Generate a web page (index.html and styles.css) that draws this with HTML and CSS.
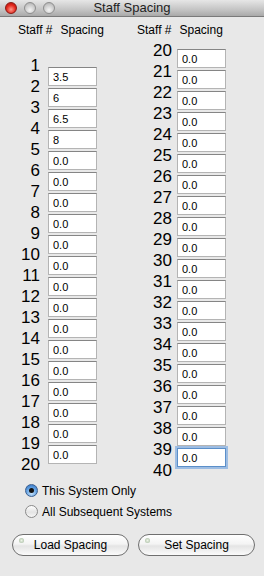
FILE: index.html
```html
<!DOCTYPE html>
<html lang="en">
<head>
    <meta charset="UTF-8">
    <meta name="viewport" content="width=device-width, initial-scale=1.0">
    <title>Staff Spacing</title>
    <link rel="stylesheet" href="styles.css">
</head>
<body>
    <header class="titlebar">
        <div class="lights">
            <span class="light light-close"></span>
            <span class="light"></span>
            <span class="light"></span>
        </div>
        <div class="title">Staff Spacing</div>
    </header>
    <main class="content">
        <div class="columns">
            <section class="col col-first">
                <div class="col-head"><span>Staff #</span><span>Spacing</span></div>
                <div class="col-body">
                    <div class="nums" id="nums-a"></div>
                    <div class="fields" id="fields-a"></div>
                </div>
            </section>
            <section class="col col-second">
                <div class="col-head"><span>Staff #</span><span>Spacing</span></div>
                <div class="col-body">
                    <div class="nums" id="nums-b"></div>
                    <div class="fields" id="fields-b"></div>
                </div>
            </section>
        </div>
        <div class="options">
            <label class="option"><span class="radio radio-on"></span>This System Only</label>
            <label class="option"><span class="radio"></span>All Subsequent Systems</label>
        </div>
        <div class="actions">
            <button class="pill">Load Spacing</button>
            <button class="pill">Set Spacing</button>
        </div>
    </main>
    <script>
        const values = ['3.5', '6', '6.5', '8'];

        // Fill one column: staff numbers from..to, one field between each pair
        function fillColumn(numsId, fieldsId, from, to, focusLast) {
            const nums = document.getElementById(numsId);
            const fields = document.getElementById(fieldsId);
            for (let n = from; n <= to; n++) {
                const num = document.createElement('div');
                num.className = 'num';
                num.textContent = n;
                nums.appendChild(num);
                if (n === to) break;
                const input = document.createElement('input');
                input.type = 'text';
                input.className = 'field';
                input.value = values[n - 1] || '0.0';
                if (focusLast && n === to - 1) input.classList.add('field-focus');
                fields.appendChild(input);
            }
        }

        fillColumn('nums-a', 'fields-a', 1, 20, false);
        fillColumn('nums-b', 'fields-b', 20, 40, true);
    </script>
</body>
</html>
```

FILE: styles.css
```css
body {
    margin: 0;
    padding: 0;
    background-color: #e8e8e8;
    font-family: "Liberation Sans", Arial, sans-serif;
    color: #000;
}

.titlebar {
    height: 16px;
    display: grid;
    grid-template-columns: 1fr auto 1fr;
    align-items: center;
    background: linear-gradient(#e6e6e6, #c4c4c4 60%, #a9a9a9);
    border-bottom: 1px solid #7a7a7a;
}

.lights {
    display: flex;
    gap: 7px;
    padding-left: 5px;
}

.light {
    width: 12px;
    height: 12px;
    border-radius: 50%;
    box-sizing: border-box;
    border: 1px solid #8e8e8e;
    background: radial-gradient(circle at 50% 70%, #f4f4f4, #c9c9c9 60%, #a8a8a8);
}

.light-close {
    border-color: #8a1a14;
    background: radial-gradient(circle at 50% 65%, #ff9a8c, #e2261b 55%, #a8140c);
}

.title {
    font-size: 13px;
    color: #1e1e1e;
    line-height: 16px;
}

.content {
    padding-top: 6px;
}

.columns {
    display: flex;
}

.col-first {
    width: 97px;
}

.col-second {
    margin-left: 35px;
}

.col-head {
    display: flex;
    gap: 8px;
    height: 14px;
    line-height: 14px;
    font-size: 12px;
    white-space: nowrap;
}

.col-first .col-head {
    padding-left: 18px;
}

.col-second .col-head {
    padding-left: 5px;
}

.col-body {
    display: flex;
}

.nums {
    width: 40px;
    text-align: right;
}

.num {
    height: 21px;
    line-height: 21px;
    font-size: 17px;
}

.col-first .nums {
    margin-top: 18px;
}

.col-first .fields {
    margin-top: 30px;
    margin-left: 8px;
}

.col-second .nums {
    margin-top: 3px;
}

.col-second .fields {
    margin-top: 12px;
    margin-left: 5px;
}

.field {
    display: block;
    box-sizing: border-box;
    width: 49px;
    height: 19px;
    margin: 0 0 2px 0;
    padding: 1px 4px 0;
    border: 1px solid #b4b4b4;
    border-top-color: #858585;
    background-color: #fff;
    font-family: "Liberation Sans", Arial, sans-serif;
    font-size: 11px;
    color: #000;
    outline: none;
}

.field-focus {
    border-color: #5b8fc9;
    box-shadow: 0 0 0 2px #9dbde3;
}

.options {
    margin-top: -1px;
    padding-left: 25px;
}

.option {
    display: flex;
    align-items: center;
    gap: 4px;
    height: 21px;
    font-size: 12px;
}

.radio {
    width: 13px;
    height: 13px;
    box-sizing: border-box;
    border-radius: 50%;
    border: 1px solid #8a8a8a;
    background: linear-gradient(#ffffff, #e4e4e4 55%, #f6f6f6);
    display: flex;
    align-items: center;
    justify-content: center;
}

.radio-on {
    border-color: #3b5f8f;
    background: radial-gradient(circle at 50% 75%, #c6e2fb, #5f9ee0 55%, #3170c0);
}

.radio-on::after {
    content: "";
    width: 5px;
    height: 5px;
    border-radius: 50%;
    background-color: #111;
}

.actions {
    display: flex;
    gap: 9px;
    padding-left: 12px;
    margin-top: 12px;
}

.pill {
    position: relative;
    width: 117px;
    height: 22px;
    border: 1px solid #6f6f6f;
    border-radius: 11px;
    background: linear-gradient(#ffffff, #f4f4f4 45%, #e4e4e4 55%, #fbfbfb);
    font-family: "Liberation Sans", Arial, sans-serif;
    font-size: 12px;
    color: #000;
    padding: 0;
}

.pill::before {
    content: "";
    position: absolute;
    left: 6px;
    top: 3px;
    width: 5px;
    height: 5px;
    border-radius: 50%;
    background: radial-gradient(#eef5e8, #9fb59a);
}
```
